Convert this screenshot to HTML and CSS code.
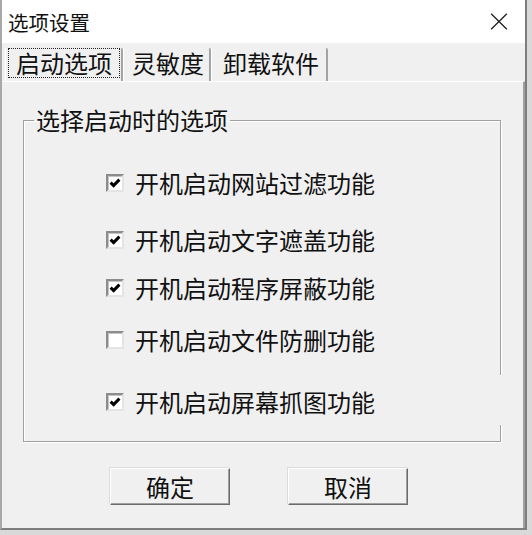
FILE: index.html
```html
<!DOCTYPE html>
<html lang="zh-CN">
<head>
<meta charset="utf-8">
<title>选项设置</title>
<link rel="stylesheet" href="styles.css">
</head>
<body>
<div class="window">
  <div class="titlebar">
    <span class="title">选项设置</span>
    <svg class="close" viewBox="0 0 18 18" aria-hidden="true">
      <path d="M0.7 0.7 L17.3 17.3 M17.3 0.7 L0.7 17.3" stroke="#222" stroke-width="1.4" fill="none"/>
    </svg>
  </div>
  <div class="tabs">
    <div class="tab tab-first"><span class="focus">启动选项</span></div>
    <div class="tab tab-second">灵敏度</div>
    <div class="tab tab-third">卸载软件</div>
  </div>
  <div class="panel">
    <fieldset class="group">
      <legend class="group-title">选择启动时的选项</legend>
      <label class="opt"><span class="box"><svg viewBox="0 0 14 14"><path d="M2.6 6.6 L5.6 9.6 L11.4 3.6" stroke="#000" stroke-width="3" fill="none"/></svg></span><span class="opt-text">开机启动网站过滤功能</span></label>
      <label class="opt"><span class="box"><svg viewBox="0 0 14 14"><path d="M2.6 6.6 L5.6 9.6 L11.4 3.6" stroke="#000" stroke-width="3" fill="none"/></svg></span><span class="opt-text">开机启动文字遮盖功能</span></label>
      <label class="opt"><span class="box"><svg viewBox="0 0 14 14"><path d="M2.6 6.6 L5.6 9.6 L11.4 3.6" stroke="#000" stroke-width="3" fill="none"/></svg></span><span class="opt-text">开机启动程序屏蔽功能</span></label>
      <label class="opt"><span class="box"></span><span class="opt-text">开机启动文件防删功能</span></label>
      <label class="opt"><span class="box"><svg viewBox="0 0 14 14"><path d="M2.6 6.6 L5.6 9.6 L11.4 3.6" stroke="#000" stroke-width="3" fill="none"/></svg></span><span class="opt-text">开机启动屏幕抓图功能</span></label>
    </fieldset>
    <div class="buttons">
      <button class="btn" type="button">确定</button>
      <button class="btn" type="button">取消</button>
    </div>
  </div>
</div>
</body>
</html>
```
FILE: styles.css
```css
html, body {
  margin: 0;
  padding: 0;
}
body {
  width: 532px;
  height: 535px;
  overflow: hidden;
  background: #d9d9d9;
  font-family: "Noto Sans CJK SC", "Noto Sans", sans-serif;
  color: #111;
}
.window {
  width: 527px;
  height: 530px;
  box-sizing: border-box;
  border-left: 2px solid #a8a8a8;
  border-right: 2px solid #7d7d7d;
  border-bottom: 2px solid #7d7d7d;
  background: #f0f0f0;
  display: flex;
  flex-direction: column;
}
.titlebar {
  flex: none;
  height: 43px;
  background: #fff;
  display: flex;
  align-items: center;
  justify-content: space-between;
  padding: 0 17px 0 6px;
}
.title {
  font-size: 20.5px;
  line-height: 24px;
}
.close {
  width: 18px;
  height: 17px;
}
.tabs {
  flex: none;
  height: 38px;
  display: flex;
  align-items: flex-end;
  padding-left: 3px;
}
.tab {
  height: 33px;
  box-sizing: border-box;
  display: flex;
  align-items: center;
  padding-bottom: 3px;
  font-size: 24px;
  line-height: 26px;
  border-left: 1px solid #fff;
  border-right: 2px solid #a3a3a3;
  border-top-right-radius: 2px;
}
.tab-first {
  padding-left: 2px;
  padding-right: 1px;
}
.tab-second {
  padding-left: 8px;
  padding-right: 5px;
}
.tab-third {
  padding-left: 11px;
  padding-right: 7px;
}
.focus {
  display: block;
  height: 30px;
  box-sizing: border-box;
  padding: 1px 7px;
  border: 1px dotted #222;
}
.panel {
  flex: 1;
  border-top: 1px solid #fff;
  border-right: 2px solid #a0a0a0;
  display: flex;
  flex-direction: column;
}
.group {
  position: relative;
  margin: 25px 0 0 21px;
  width: 478px;
  min-width: 0;
  box-sizing: border-box;
  padding: 37px 0 26px 10px;
  border: 1px solid #a0a0a0;
  box-shadow: inset 1px 1px 0 #fff, 1px 1px 0 #fff;
}
.group::after {
  content: "";
  position: absolute;
  right: -3px;
  bottom: 16px;
  width: 3px;
  height: 50px;
  background: #f0f0f0;
}
.group-title {
  padding: 0 2px;
  font-size: 24px;
  line-height: 26px;
}
.opt {
  display: flex;
  align-items: center;
  height: 26px;
  margin-left: 72px;
  font-size: 24px;
  line-height: 26px;
}
.opt:nth-of-type(2) { margin-top: 31px; }
.opt:nth-of-type(3) { margin-top: 22px; }
.opt:nth-of-type(4) { margin-top: 26px; }
.opt:nth-of-type(5) { margin-top: 36px; }
.box {
  flex: none;
  width: 18px;
  height: 18px;
  box-sizing: border-box;
  margin-right: 11px;
  background: #fff;
  border-top: 2px solid #8c8c8c;
  border-left: 2px solid #8c8c8c;
  border-right: 2px solid #e4e4e4;
  border-bottom: 2px solid #e4e4e4;
  box-shadow: inset 1px 1px 0 #c4c4c4;
  display: flex;
  align-items: center;
  justify-content: center;
}
.box svg {
  width: 14px;
  height: 14px;
}
.buttons {
  display: flex;
  gap: 58px;
  margin: 26px 0 0 108px;
}
.btn {
  width: 120px;
  height: 37px;
  padding: 0;
  font-family: "Noto Sans CJK SC", "Noto Sans", sans-serif;
  font-size: 24px;
  line-height: 26px;
  color: #111;
  background: #f0f0f0;
  border: 1px solid;
  border-color: #fff #6a6a6a #6a6a6a #fff;
  box-shadow: inset -1px -1px 0 #a0a0a0, -1px -1px 0 #dcdcdc;
}
```
